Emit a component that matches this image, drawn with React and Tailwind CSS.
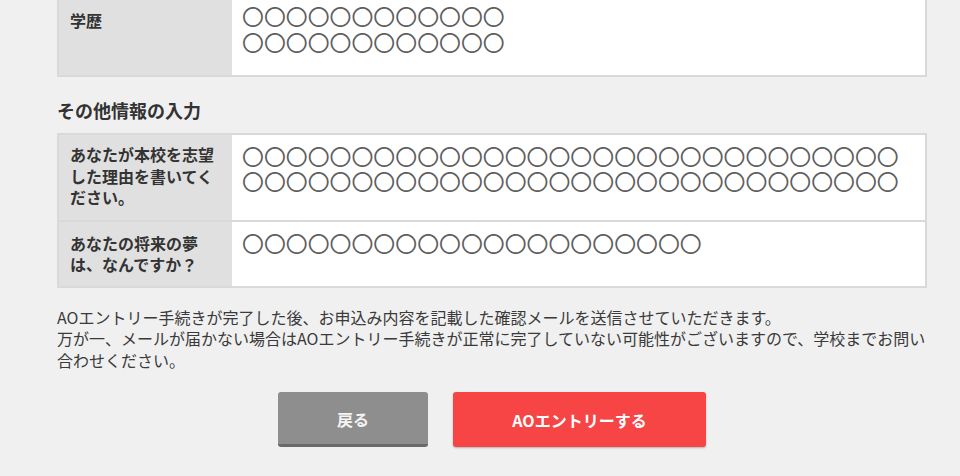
import React from "react";

const C = (n) => "〇".repeat(n);

export default function App() {
  const font = { fontFamily: '"Noto Sans CJK JP", "Noto Sans", sans-serif' };
  return (
    <div className="w-[960px] h-[476px] overflow-hidden bg-[#f0f0f0] text-[#333]" style={font}>
      <div className="ml-[57px] w-[870px]">
        {/* 学歴 row (top cut off) */}
        <div className="flex h-[77px] border-x-2 border-b-2 border-[#d9d9d9]">
          <div className="w-[173px] shrink-0 bg-[#e0e0e0] pl-[11px] pt-[9px] text-[16px] font-bold leading-[22px]">
            学歴
          </div>
          <div className="flex-1 bg-white pl-[10px] pt-[3px] text-[21.9px] leading-[26px] text-[#5e5e5e] whitespace-nowrap">
            <div>{C(12)}</div>
            <div>{C(12)}</div>
          </div>
        </div>

        <h2 className="mt-[21px] text-[18px] font-bold leading-[24px] text-[#333]">その他情報の入力</h2>

        <div className="mt-[11px] border-2 border-[#d9d9d9]">
          <div className="flex border-b-2 border-[#d9d9d9]">
            <div className="w-[173px] shrink-0 bg-[#e0e0e0] pl-[11px] pt-[9px] pb-[11px] text-[16px] font-bold leading-[21.5px]">
              あなたが本校を志望<br />した理由を書いてく<br />ださい。
            </div>
            <div className="flex-1 bg-white pl-[10px] pt-[8px] text-[21.9px] leading-[25px] text-[#5e5e5e] whitespace-nowrap">
              <div>{C(30)}</div>
              <div>{C(30)}</div>
            </div>
          </div>
          <div className="flex">
            <div className="w-[173px] shrink-0 bg-[#e0e0e0] pl-[11px] pt-[11px] pb-[10px] text-[16px] font-bold leading-[21.5px]">
              あなたの将来の夢<br />は、なんですか？
            </div>
            <div className="flex-1 bg-white pl-[10px] pt-[8px] text-[21.9px] leading-[25px] text-[#5e5e5e] whitespace-nowrap">
              <div>{C(21)}</div>
            </div>
          </div>
        </div>

        <p className="mt-[19px] text-[16px] leading-[21.5px] text-[#3a3a3a]">
          <span className="whitespace-nowrap">AOエントリー手続きが完了した後、お申込み内容を記載した確認メールを送信させていただきます。</span>
          <br />
          <span className="whitespace-nowrap">万が一、メールが届かない場合はAOエントリー手続きが正常に完了していない可能性がございますので、学校までお問い</span>
          <br />
          <span className="whitespace-nowrap">合わせください。</span>
        </p>

        <div className="mt-[21px] flex justify-center gap-[25px]">
          <button className="flex h-[55px] w-[150px] items-center justify-center rounded-[3px] border-b-[3px] border-[#6a6a6a] bg-[#8e8e8e] pt-[2px] text-[16px] font-bold text-[#f4f4f4]">
            戻る
          </button>
          <button className="flex h-[55px] w-[253px] items-center justify-center rounded-[3px] bg-[#f74545] text-[16px] font-bold text-white shadow-[0_1px_2px_rgba(0,0,0,0.25)]">
            AOエントリーする
          </button>
        </div>
      </div>
    </div>
  );
}
